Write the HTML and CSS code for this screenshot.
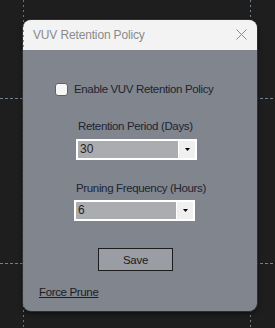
FILE: index.html
```html
<!DOCTYPE html>
<html>
<head>
<meta charset="utf-8">
<link rel="stylesheet" href="styles.css">
</head>
<body>
<div class="stage">
  <div class="guide guide-v guide-left"></div>
  <div class="guide guide-v guide-right"></div>
  <div class="guide guide-h guide-top"></div>
  <div class="guide guide-h guide-bottom"></div>
  <div class="dialog">
    <div class="titlebar">
      <span class="title">VUV Retention Policy</span>
      <svg class="close" width="11" height="11" viewBox="0 0 11 11"><path d="M0.5 0.5 L10.5 10.5 M10.5 0.5 L0.5 10.5" stroke="#8c8c8c" stroke-width="1" fill="none"/></svg>
    </div>
    <div class="content">
      <label class="check-row"><span class="checkbox"></span><span class="check-text">Enable VUV Retention Policy</span></label>
      <div class="field-label label-days">Retention Period (Days)</div>
      <div class="combo combo-days"><span class="combo-value">30</span><span class="combo-btn"><svg width="5" height="3" viewBox="0 0 5 3"><polygon points="0,0 5,0 2.5,3" fill="#000"/></svg></span></div>
      <div class="field-label label-hours">Pruning Frequency (Hours)</div>
      <div class="combo combo-hours"><span class="combo-value">6</span><span class="combo-btn"><svg width="5" height="3" viewBox="0 0 5 3"><polygon points="0,0 5,0 2.5,3" fill="#000"/></svg></span></div>
      <button class="save">Save</button>
      <a class="link">Force Prune</a>
    </div>
  </div>
</div>
</body>
</html>
```

FILE: styles.css
```css
html, body {
  margin: 0;
  padding: 0;
}
body {
  background: #1e1e1e;
  width: 275px;
  height: 328px;
  overflow: hidden;
  font-family: "Liberation Sans", Arial, sans-serif;
}
.stage {
  position: relative;
  width: 275px;
  height: 328px;
  padding-top: 20px;
  padding-left: 23px;
  box-sizing: border-box;
}
.guide {
  position: absolute;
  pointer-events: none;
}
.guide-v {
  top: 0;
  width: 1px;
  height: 328px;
  background: repeating-linear-gradient(to bottom, #6f8194 0 2px, transparent 2px 5px);
}
.guide-left {
  left: 23px;
  z-index: 2;
  opacity: 0.85;
}
.guide-right {
  left: 250px;
}
.guide-h {
  left: 0;
  width: 275px;
  height: 1px;
  background: repeating-linear-gradient(to right, #6f8194 0 3px, transparent 3px 5px);
}
.guide-top { top: 98px; }
.guide-bottom { top: 263px; }

.dialog {
  position: relative;
  z-index: 1;
  width: 234px;
  height: 291px;
  border-radius: 8px;
  background: #80858e;
  box-shadow: 0 0 0 1px rgba(58, 58, 58, 0.7), 0 2px 5px rgba(0, 0, 0, 0.6);
  overflow: hidden;
  display: flex;
  flex-direction: column;
}
.titlebar {
  height: 30px;
  flex: none;
  background: #f3f3f3;
  display: flex;
  align-items: center;
  justify-content: space-between;
  padding: 0 10px 0 10px;
}
.title {
  font-size: 12px;
  color: #8a8a8a;
  letter-spacing: -0.15px;
}
.close {
  display: block;
  margin-top: -1px;
}
.content {
  display: flex;
  flex-direction: column;
  align-items: flex-start;
  font-size: 11.5px;
  letter-spacing: -0.35px;
  color: #1e2430;
}
.check-row {
  display: flex;
  align-items: center;
  height: 13px;
  margin: 33px 0 0 32px;
  line-height: 13px;
}
.checkbox {
  width: 13px;
  height: 13px;
  box-sizing: border-box;
  border: 1px solid #5f6165;
  border-radius: 3px;
  background: #f6f6f6;
  margin-right: 6px;
}
.check-text {
  color: #1e2430;
}
.field-label {
  line-height: 14px;
}
.label-days {
  margin: 23px 0 0 55px;
}
.label-hours {
  margin: 21px 0 0 53px;
}
.combo {
  width: 121px;
  height: 21px;
  box-sizing: border-box;
  border: 2px solid #ffffff;
  background: #aaacb0;
  display: flex;
  align-items: stretch;
}
.combo-days {
  margin: 6px 0 0 53px;
}
.combo-hours {
  margin: 5px 0 0 51px;
}
.combo-value {
  flex: 1;
  padding-left: 2px;
  font-size: 12px;
  letter-spacing: 0;
  line-height: 17px;
  color: #2a221c;
}
.combo-btn {
  width: 16px;
  border-left: 1px solid #ffffff;
  background: #f0f0f0;
  display: flex;
  align-items: center;
  justify-content: center;
}
.combo-btn svg {
  display: block;
}
.save {
  margin: 27px 0 0 75px;
  width: 75px;
  height: 23px;
  box-sizing: border-box;
  border: 1px solid #1c1c1c;
  background: #9a9da3;
  font-family: "Liberation Sans", Arial, sans-serif;
  font-size: 11.5px;
  letter-spacing: -0.3px;
  color: #1a1a1a;
  padding: 0;
}
.link {
  margin: 14px 0 0 16px;
  line-height: 14px;
  color: #1a1d24;
  text-decoration: underline;
  text-underline-offset: 1px;
}
```
